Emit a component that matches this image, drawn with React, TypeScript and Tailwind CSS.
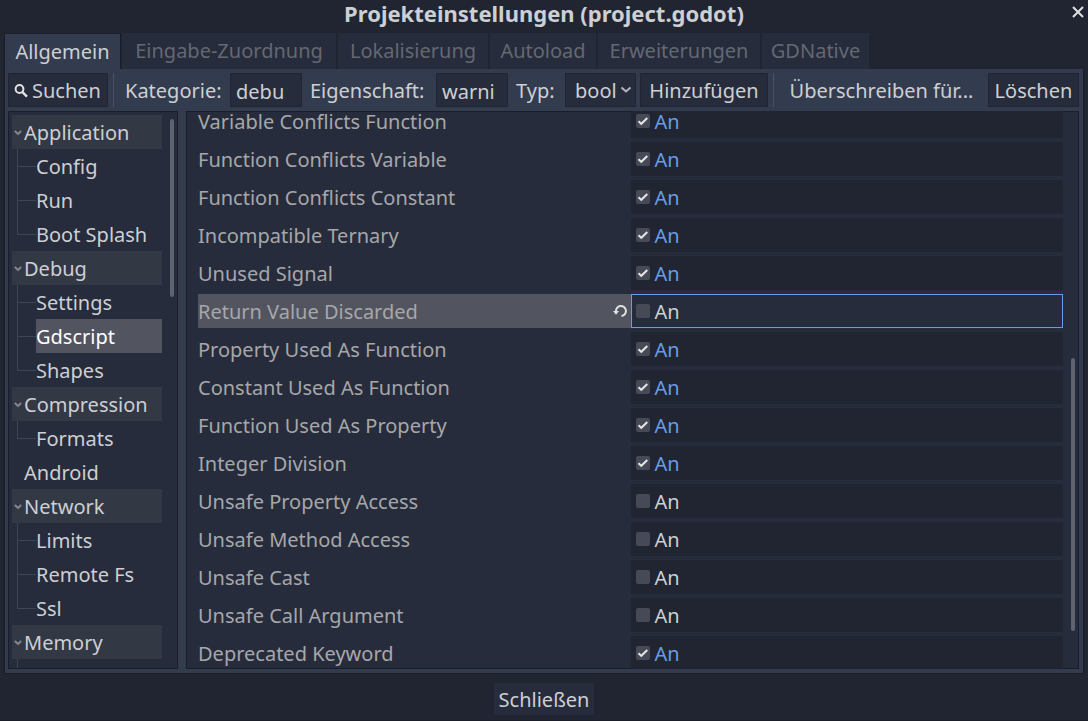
import { useState } from 'react'
import clsx from 'clsx'

const tabs = [
  { name: 'Allgemein', width: 'w-[117px]' },
  { name: 'Eingabe-Zuordnung', width: 'w-[215px]' },
  { name: 'Lokalisierung', width: 'w-[151px]' },
  { name: 'Autoload', width: 'w-[107px]' },
  { name: 'Erweiterungen', width: 'w-[163px]' },
  { name: 'GDNative', width: 'w-[108px]' },
]

const sections = [
  { name: 'Application', items: ['Config', 'Run', 'Boot Splash'] },
  { name: 'Debug', items: ['Settings', 'Gdscript', 'Shapes'] },
  { name: 'Compression', items: ['Formats'] },
  { name: 'Android', items: [] },
  { name: 'Network', items: ['Limits', 'Remote Fs', 'Ssl'] },
  { name: 'Memory', items: [''] },
]

const warnings = [
  { name: 'Variable Conflicts Function', on: true },
  { name: 'Function Conflicts Variable', on: true },
  { name: 'Function Conflicts Constant', on: true },
  { name: 'Incompatible Ternary', on: true },
  { name: 'Unused Signal', on: true },
  { name: 'Return Value Discarded', on: false },
  { name: 'Property Used As Function', on: true },
  { name: 'Constant Used As Function', on: true },
  { name: 'Function Used As Property', on: true },
  { name: 'Integer Division', on: true },
  { name: 'Unsafe Property Access', on: false },
  { name: 'Unsafe Method Access', on: false },
  { name: 'Unsafe Cast', on: false },
  { name: 'Unsafe Call Argument', on: false },
  { name: 'Deprecated Keyword', on: true },
]

const button = 'h-[34px] shrink-0 border border-[#202531] bg-[#262c3b] pt-0.5 whitespace-nowrap'
const input = 'h-[34px] w-[72px] shrink-0 border border-[#202531] bg-[#262c3b] px-[5px] pt-0.5 outline-none'

function Toolbar() {
  return (
    <div className="flex items-center gap-1">
      <button className={clsx(button, 'flex w-[100px] items-center gap-1 pl-[5px]')}>
        <svg width="14" height="14" viewBox="0 0 14 14" fill="none" stroke="#e0e0e0" strokeWidth="2">
          <circle cx="5.5" cy="5" r="3.9" />
          <path d="M8.2 7.8 13 12.6" strokeWidth="2.4" />
        </svg>
        Suchen
      </button>
      <span className="mx-px h-[34px] w-px shrink-0 bg-[#4b5160]" />
      <label htmlFor="category" className="w-[107px] shrink-0 pt-0.5 pl-[6px]">Kategorie:</label>
      <input id="category" defaultValue="debu" className={input} />
      <label htmlFor="property" className="w-[126px] shrink-0 pt-0.5 pl-1">Eigenschaft:</label>
      <input id="property" defaultValue="warni" className={input} />
      <label htmlFor="type" className="w-[49px] shrink-0 pt-0.5 pl-1">Typ:</label>
      <div className="relative w-[71px] shrink-0">
        <select
          id="type"
          defaultValue="bool"
          className="h-[34px] w-full appearance-none border border-[#202531] bg-[#262c3b] pt-0.5 pl-[9px] outline-none"
        >
          <option>bool</option>
          <option>int</option>
          <option>float</option>
        </select>
        <svg
          className="pointer-events-none absolute top-[13px] right-1"
          width="12" height="8" viewBox="0 0 12 8" fill="none" stroke="#b5b7bc" strokeWidth="2"
        >
          <path d="M1.5 1.5 6 5.5l4.5-4" />
        </svg>
      </div>
      <button className={clsx(button, 'w-[128px]')}>Hinzufügen</button>
      <span className="mx-px h-[34px] w-px shrink-0 bg-[#4b5160]" />
      <button className="h-[34px] min-w-0 flex-1 truncate pt-0.5 text-center">Überschreiben für...</button>
      <button className={clsx(button, 'w-[91px]')}>Löschen</button>
    </div>
  )
}

function Tree() {
  const [selected, setSelected] = useState('Gdscript')

  return (
    <nav className="flex w-[170px] shrink-0 overflow-hidden border border-[#191e28] bg-[#262c3b] pt-[3px] pl-[3px]">
      <ul className="w-[150px] shrink-0">
        {sections.map((section) => (
          <li key={section.name}>
            <button
              className={clsx(
                'flex h-[34px] w-full items-center pt-0.5',
                section.items.length > 0 ? 'bg-[#333845]' : 'pl-3'
              )}
            >
              {section.items.length > 0 && (
                <svg className="mr-[2px] ml-[2px] shrink-0" width="8" height="6" viewBox="0 0 8 6" fill="none" stroke="#85888f" strokeWidth="2">
                  <path d="M.8 1 4 4l3.2-3" />
                </svg>
              )}
              {section.name}
            </button>
            <ul>
              {section.items.map((item, i) => (
                <li key={item} className="flex h-[34px] pl-[5px]">
                  <span className="flex w-[19px] shrink-0 flex-col">
                    <span className="h-[18px] border-b border-l border-[#3f4452]" />
                    {i < section.items.length - 1 && <span className="flex-1 border-l border-[#3f4452]" />}
                  </span>
                  <button
                    onClick={() => setSelected(item)}
                    className={clsx('flex-1 pt-0.5 text-left', selected === item && 'bg-[#525560] text-white')}
                  >
                    {item}
                  </button>
                </li>
              ))}
            </ul>
          </li>
        ))}
      </ul>
      <span className="mt-1 ml-2 h-[178px] w-1 shrink-0 rounded-full bg-[#5f636d]" />
    </nav>
  )
}

function WarningRow({ name, on }: { name: string; on: boolean }) {
  const [checked, setChecked] = useState(on)
  const current = name === 'Return Value Discarded'

  return (
    <div className="grid h-[34px] shrink-0 grid-cols-2">
      <div className={clsx('flex items-center justify-between pr-1 text-[#a6a7aa]', current && 'bg-[#525560]')}>
        <span className="pt-0.5">{name}</span>
        {current && (
          <button aria-label="Zurücksetzen">
            <svg width="14" height="14" viewBox="0 0 14 14" fill="none">
              <path d="M3 7.8A5 5 0 1 1 8.5 12" stroke="#e0e0e0" strokeWidth="2" />
              <path d="M0 7h6L3 10.8z" fill="#e0e0e0" />
            </svg>
          </button>
        )}
      </div>
      <label
        className={clsx(
          'flex items-center gap-[5px] border pl-1',
          current ? 'border-[#699ce8] bg-[#262c3b]' : 'border-[#202531] bg-[#202531]',
          checked && 'text-[#699ce8]'
        )}
      >
        <span className="grid size-[14px]">
          <input
            type="checkbox"
            checked={checked}
            onChange={() => setChecked(!checked)}
            className="col-start-1 row-start-1 size-[14px] appearance-none rounded-xs bg-[#464a56]"
          />
          {checked && (
            <svg className="pointer-events-none col-start-1 row-start-1" width="14" height="14" viewBox="0 0 14 14" fill="none" stroke="#e4e4e4" strokeWidth="2">
              <path d="m2.5 7.3 2.8 2.5 6-5.8" />
            </svg>
          )}
        </span>
        <span className="pt-0.5">An</span>
      </label>
    </div>
  )
}

export default function App() {
  return (
    <div className="flex h-screen flex-col border-b border-[#191e28] bg-[#202531] px-1 font-['Noto_Sans',sans-serif] text-xl leading-7 text-[#cdcfd3]">
      <header className="-mx-1 grid h-[33px] shrink-0 grid-cols-[20px_1fr_20px]">
        <h1 className="col-start-2 text-center text-[22px] leading-[26px] font-bold">Projekteinstellungen (project.godot)</h1>
        <button aria-label="Fenster schließen" className="flex h-6 items-center justify-center">
          <svg width="12" height="12" viewBox="0 0 12 12" stroke="#e0e0e0" strokeWidth="2">
            <path d="m1 1 10 10M11 1 1 11" />
          </svg>
        </button>
      </header>

      <div className="flex h-9 shrink-0 gap-px">
        {tabs.map((tab, i) => (
          <button
            key={tab.name}
            className={clsx(
              'shrink-0 border-r border-[#202531] text-center whitespace-nowrap',
              tab.width,
              i === 0 ? 'border-t border-l border-t-[#191e28] border-r-[#191e28] border-l-[#191e28] bg-[#333b4f]' : 'bg-[#262c3b] text-[#646872]'
            )}
          >
            {tab.name}
          </button>
        ))}
      </div>

      <main className="flex min-h-0 flex-1 flex-col gap-1 border-x border-b border-[#191e28] bg-[#333b4f] py-1 pr-1 pl-[3px]">
        <Toolbar />
        <div className="flex min-h-0 flex-1 gap-2">
          <Tree />
          <section className="flex min-w-0 flex-1 overflow-hidden bg-[#262c3b] pl-3 inset-shadow-[0_0_0_1px_#191e28]">
            <div className="-mt-[7px] flex flex-1 flex-col gap-1">
              {warnings.map((warning) => (
                <WarningRow key={warning.name} name={warning.name} on={warning.on} />
              ))}
            </div>
            <span className="mt-[247px] mr-1 ml-2 h-[273px] w-1 shrink-0 rounded-full bg-[#5f636d]" />
          </section>
        </div>
      </main>

      <footer className="flex h-[46px] shrink-0 items-center justify-center pt-1">
        <button className="h-8 bg-[#262c3b] px-[5px] pt-0.5">Schließen</button>
      </footer>
    </div>
  )
}
